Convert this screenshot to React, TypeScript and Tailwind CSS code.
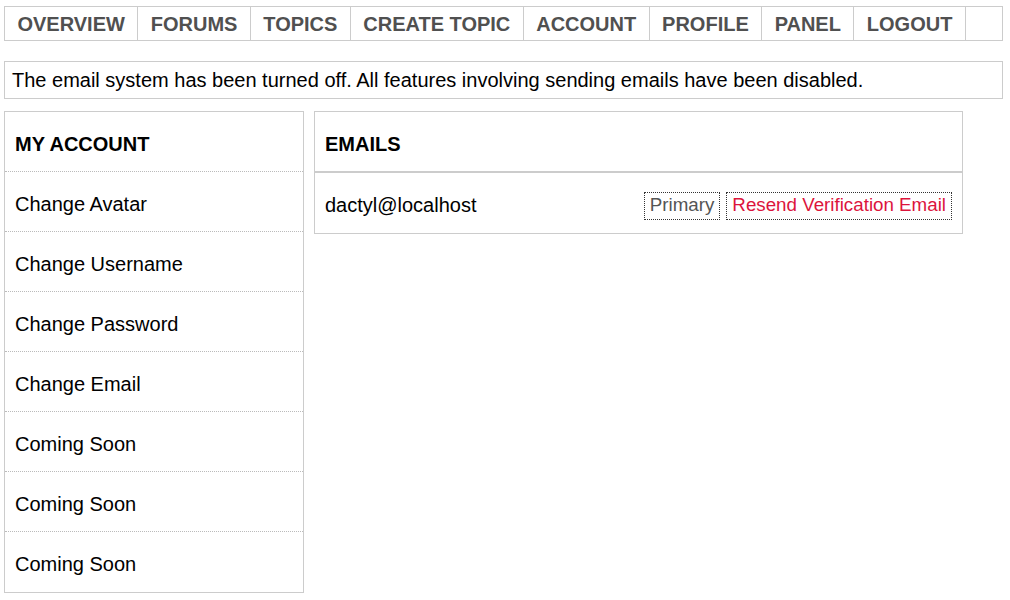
import React from "react";

const navItems = ["OVERVIEW", "FORUMS", "TOPICS", "CREATE TOPIC", "ACCOUNT", "PROFILE", "PANEL", "LOGOUT"];

const accountLinks = [
  "Change Avatar",
  "Change Username",
  "Change Password",
  "Change Email",
  "Coming Soon",
  "Coming Soon",
  "Coming Soon",
];

export default function App() {
  return (
    <div
      className="min-h-[600px] bg-white pl-[4px] pt-[6px] text-[20px] text-black"
      style={{ fontFamily: '"Liberation Sans", Arial, sans-serif' }}
    >
      {/* Top nav */}
      <nav className="flex w-[999px] border border-[#cccccc]">
        {navItems.map((item) => (
          <a
            key={item}
            href="#"
            className="flex h-[33px] items-center border-r border-[#cccccc] px-[12.45px] font-bold leading-none text-[#505050]"
          >
            {item}
          </a>
        ))}
      </nav>

      {/* Notice */}
      <div className="mt-[20px] flex h-[38px] w-[999px] items-center border border-[#cccccc] px-[7px] leading-none">
        The email system has been turned off. All features involving sending emails have been disabled.
      </div>

      <div className="mt-[12px] flex items-start gap-[10px]">
        {/* Sidebar */}
        <aside className="w-[300px] border border-[#cccccc]">
          <div className="flex h-[60px] items-center border-b border-dotted border-[#bbbbbb] px-[10px] pt-[4px] font-bold leading-none">
            MY ACCOUNT
          </div>
          {accountLinks.map((label, i) => (
            <div
              key={i}
              className={
                i === accountLinks.length - 1
                  ? "flex h-[60px] items-center px-[10px] pt-[4px] leading-none"
                  : "flex h-[60px] items-center border-b border-dotted border-[#bbbbbb] px-[10px] pt-[4px] leading-none"
              }
            >
              {label}
            </div>
          ))}
        </aside>

        {/* Emails panel */}
        <section className="w-[649px] border border-[#cccccc]">
          <div className="flex h-[61px] items-center border-b-2 border-[#cccccc] px-[10px] pt-[4px] font-bold leading-none">
            EMAILS
          </div>
          <div className="flex h-[60px] items-center justify-between px-[10px] pt-[4px] leading-none">
            <span>dactyl@localhost</span>
            <div className="mt-[1px] flex gap-[6px] text-[18.75px]">
              <span className="flex h-[28px] items-center border border-dotted border-[#333333] px-[5px] text-[#555555]">
                Primary
              </span>
              <a
                href="#"
                className="flex h-[28px] items-center border border-dotted border-[#333333] px-[5px] text-[#dc143c]"
              >
                Resend Verification Email
              </a>
            </div>
          </div>
        </section>
      </div>
    </div>
  );
}
